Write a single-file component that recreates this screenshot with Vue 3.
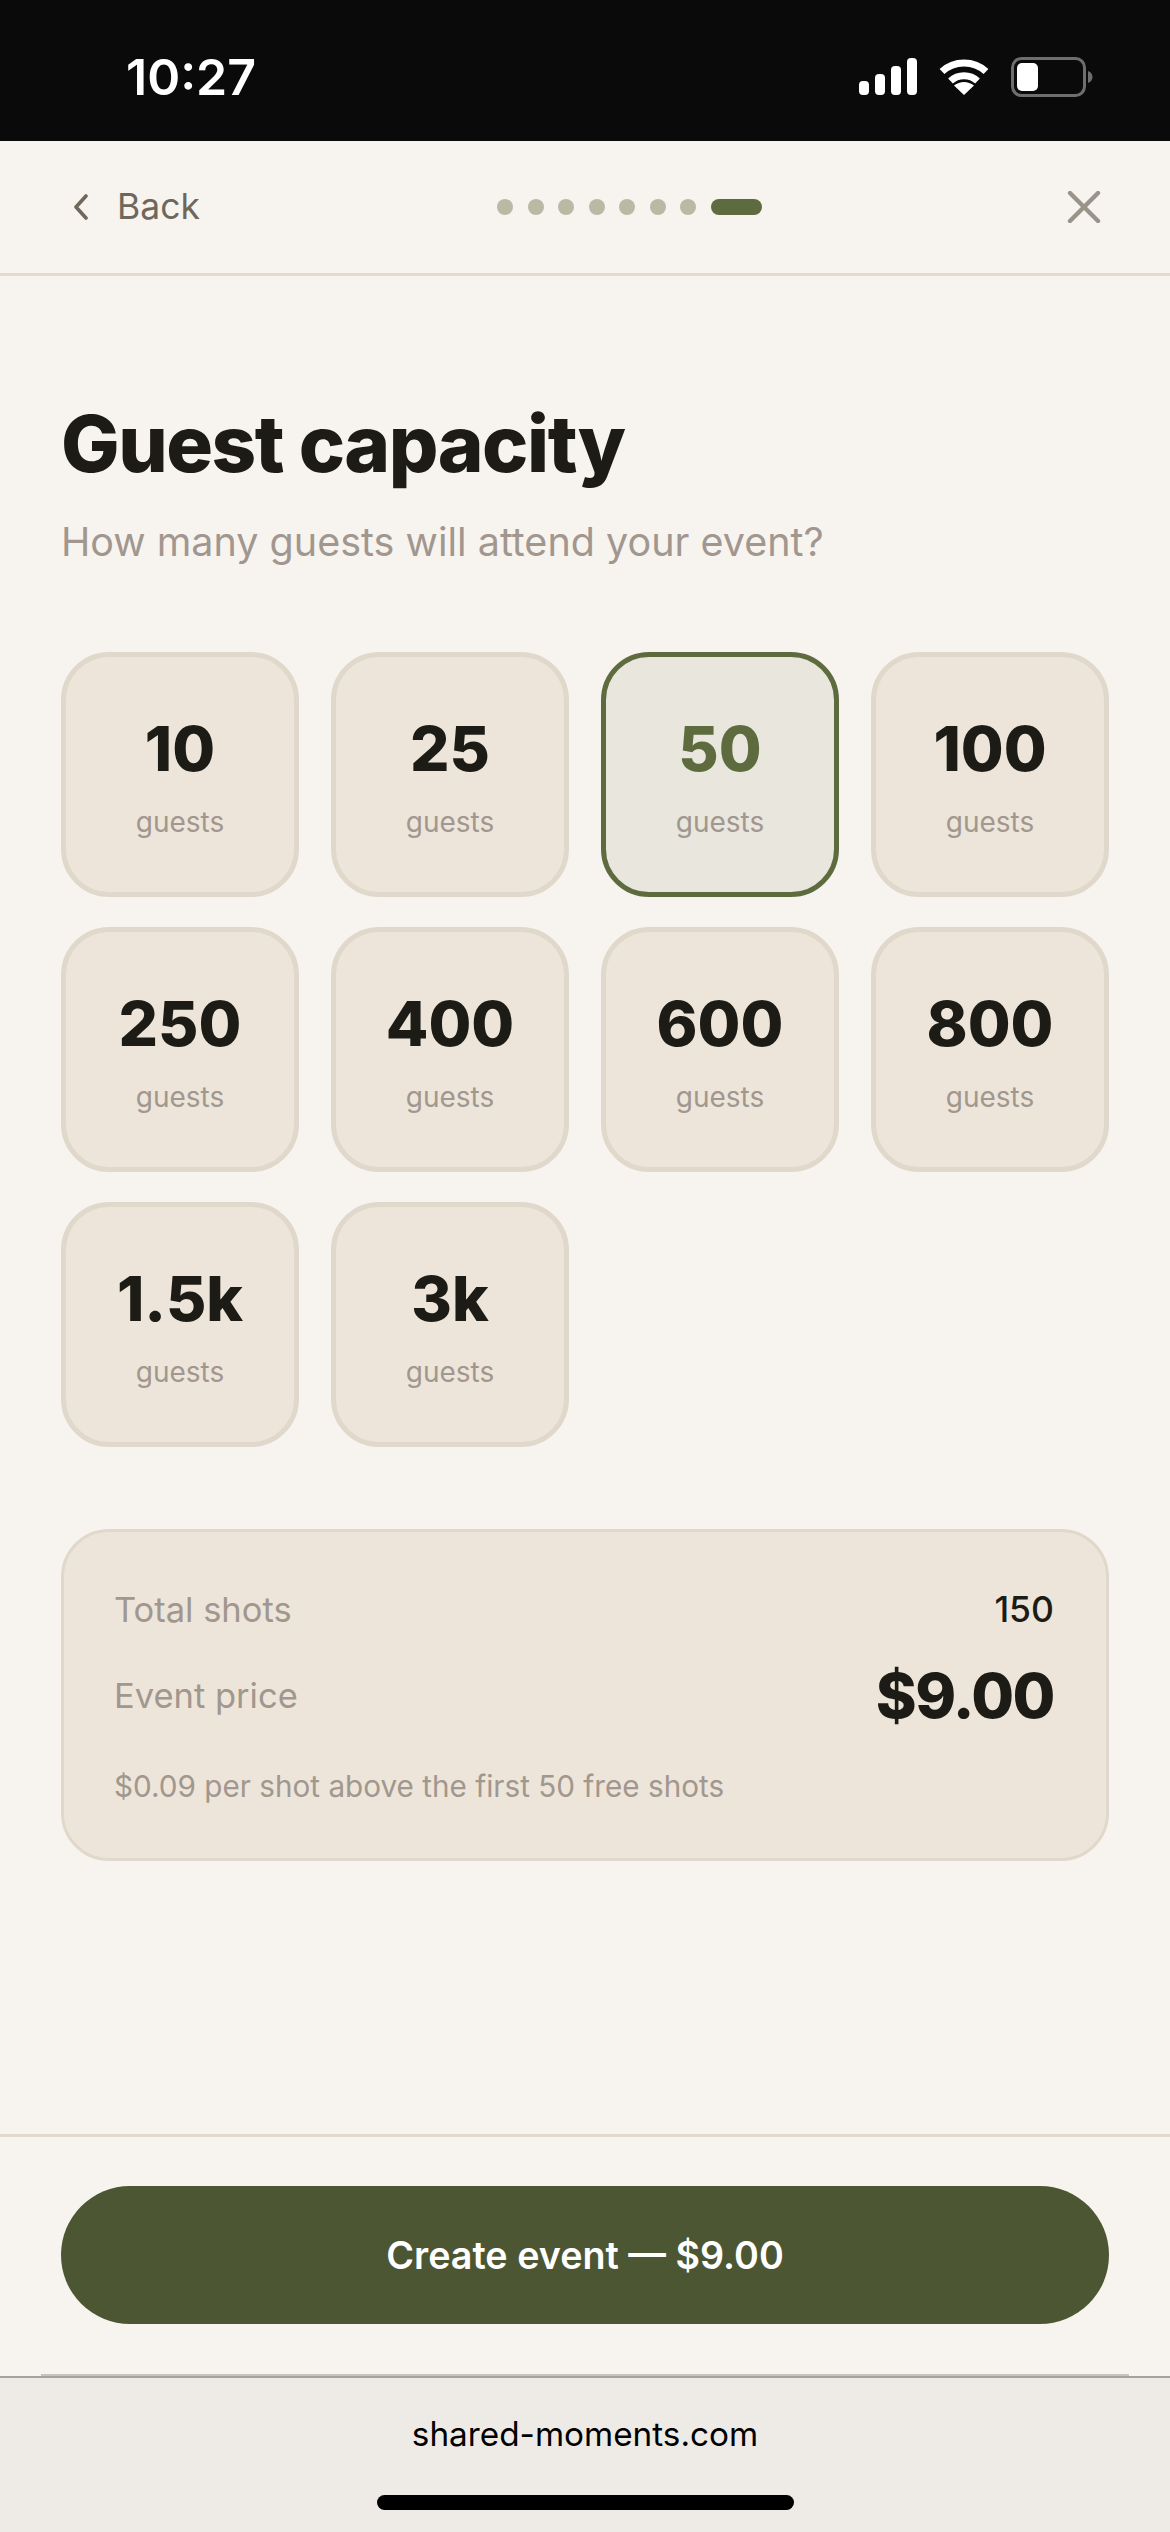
<template>
    <div class="screen">
        <div class="status-bar">
            <span class="time">10:27</span>
            <div class="status-icons">
                <svg width="58" height="38" viewBox="0 0 58 38" fill="#fff">
                    <rect x="0" y="23" width="10" height="14" rx="4" />
                    <rect x="16" y="16" width="10" height="21" rx="4" />
                    <rect x="32" y="8" width="10" height="29" rx="4" />
                    <rect x="48" y="0" width="10" height="37" rx="4" />
                </svg>
                <svg width="50" height="38" viewBox="0 0 50 38" fill="none" stroke="#fff" stroke-width="7">
                    <path d="M3 13.500C15 2 35 2 47 13.500" />
                    <path d="M11.500 23C19 16 31 16 38.500 23" />
                    <path d="M15 27.500L25 37L35 27.500C29 22.800 21 22.800 15 27.500Z" fill="#fff" stroke="none" />
                </svg>
                <svg width="82" height="40" viewBox="0 0 82 40" fill="none">
                    <rect x="1.500" y="1.500" width="72" height="37" rx="9" stroke="#6e6e6e" stroke-width="3" />
                    <rect x="6" y="6" width="21" height="28" rx="5" fill="#fff" />
                    <path d="M77 14C80 15 81.500 17.500 81.500 20C81.500 22.500 80 25 77 26Z" fill="#6e6e6e" />
                </svg>
            </div>
        </div>

        <div class="nav">
            <div class="back">
                <svg width="16" height="26" viewBox="0 0 16 26" fill="none" stroke="#6f675b" stroke-width="3.600" stroke-linecap="round" stroke-linejoin="round">
                    <path d="M13 2L3 13L13 24" />
                </svg>
                <span>Back</span>
            </div>
            <div class="steps">
                <span v-for="n in 7" :key="n" class="step"></span>
                <span class="step current"></span>
            </div>
            <svg class="close" width="34" height="32" viewBox="0 0 34 32" fill="none" stroke="#9a9389" stroke-width="4.400" stroke-linecap="round">
                <path d="M3 2L31 30M31 2L3 30" />
            </svg>
        </div>

        <div class="content">
            <h1 class="title">Guest capacity</h1>
            <p class="subtitle">How many guests will attend your event?</p>

            <div class="options">
                <div
                    v-for="opt in options"
                    :key="opt"
                    class="option"
                    :class="{ selected: opt === selected }"
                >
                    <span class="option-value">{{ opt }}</span>
                    <span class="option-label">guests</span>
                </div>
            </div>

            <div class="summary">
                <div class="summary-row first">
                    <span class="summary-label">Total shots</span>
                    <span class="summary-shots">150</span>
                </div>
                <div class="summary-row">
                    <span class="summary-label">Event price</span>
                    <span class="summary-price">$9.00</span>
                </div>
                <p class="summary-note">$0.09 per shot above the first 50 free shots</p>
            </div>
        </div>

        <div class="footer">
            <button class="create-btn">Create event — $9.00</button>
        </div>

        <div class="browser-bar">
            <span class="url">shared-moments.com</span>
            <div class="home-indicator"></div>
        </div>
    </div>
</template>

<script setup>
import { ref } from 'vue';

const options = ['10', '25', '50', '100', '250', '400', '600', '800', '1.5k', '3k'];
const selected = ref('50');
</script>

<style>
html, body {
    margin: 0;
    background: #f7f4ef;
}
</style>

<style scoped>
.screen {
    width: 1170px;
    height: 2532px;
    display: flex;
    flex-direction: column;
    background: #f7f4ef;
    font-family: Inter, "Liberation Sans", sans-serif;
    overflow: hidden;
}

.status-bar {
    height: 141px;
    flex: none;
    box-sizing: border-box;
    background: #0a0a0a;
    display: flex;
    align-items: center;
    justify-content: space-between;
    padding: 26px 77px 14px 126px;
}

.time {
    color: #fff;
    font-size: 50px;
    font-weight: 600;
    line-height: 1;
}

.status-icons {
    display: flex;
    align-items: center;
    gap: 22px;
}

.nav {
    height: 135px;
    flex: none;
    box-sizing: border-box;
    border-bottom: 3px solid #e3dacf;
    display: flex;
    align-items: center;
    justify-content: space-between;
    padding: 2px 69px 3px 73px;
    position: relative;
}

.back {
    display: flex;
    align-items: center;
    gap: 28px;
    color: #6f675b;
    font-size: 35.500px;
    line-height: 1;
}

.steps {
    position: absolute;
    left: 497px;
    top: 58px;
    display: flex;
    align-items: center;
    gap: 14.500px;
}

.step {
    width: 16px;
    height: 16px;
    border-radius: 50%;
    background: #b9b9a4;
}

.step.current {
    width: 51px;
    height: 16px;
    border-radius: 8px;
    background: #5e6b3f;
}

.content {
    flex: 1;
    padding: 0 61px;
}

.title {
    margin: 123px 0 0;
    font-size: 78px;
    line-height: 90px;
    font-weight: 800;
    letter-spacing: -1.500px;
    color: #1c1b15;
}

.subtitle {
    margin: 28px 0 0;
    font-size: 39.500px;
    line-height: 50px;
    color: #a1978f;
}

.options {
    margin-top: 85px;
    display: grid;
    grid-template-columns: repeat(4, 238px);
    grid-auto-rows: 245px;
    column-gap: 32px;
    row-gap: 30px;
}

.option {
    box-sizing: border-box;
    border: 5px solid #e0d8cb;
    border-radius: 48px;
    background: #ede5d9;
    display: flex;
    flex-direction: column;
    align-items: center;
    padding-top: 54px;
}

.option.selected {
    border-color: #5e6b3f;
    background: #e8e6dd;
}

.option-value {
    font-size: 62px;
    line-height: 76px;
    font-weight: 800;
    color: #1c1b15;
}

.option.selected .option-value {
    color: #5e6b3f;
}

.option-label {
    margin-top: 17px;
    font-size: 28px;
    line-height: 36px;
    color: #a1978f;
}

.summary {
    margin-top: 82px;
    box-sizing: border-box;
    height: 332px;
    border: 3px solid #e0d8cb;
    border-radius: 48px;
    background: #ede5d9;
    padding: 0 52px 0 50px;
}

.summary-row {
    display: flex;
    align-items: center;
    justify-content: space-between;
    height: 86px;
}

.summary-row.first {
    margin-top: 34px;
}

.summary-label {
    font-size: 34.500px;
    color: #a1978f;
}

.summary-shots {
    font-size: 35.500px;
    font-weight: 500;
    color: #1c1b15;
}

.summary-price {
    font-size: 62px;
    font-weight: 800;
    letter-spacing: -1.500px;
    color: #1c1b15;
}

.summary-note {
    margin: 28px 0 0;
    font-size: 29.700px;
    line-height: 40px;
    color: #a1978f;
}

.footer {
    height: 242px;
    flex: none;
    box-sizing: border-box;
    border-top: 3px solid #e3dacf;
    padding: 49px 61px 0;
}

.create-btn {
    display: block;
    width: 100%;
    height: 138px;
    border: none;
    border-radius: 69px;
    background: #4c5632;
    color: #fff;
    font-family: inherit;
    font-size: 37.700px;
    font-weight: 600;
}

.browser-bar {
    height: 156px;
    flex: none;
    box-sizing: border-box;
    border-top: 2px solid #a3a2a1;
    background: #eeebe7;
    display: flex;
    flex-direction: column;
    align-items: center;
    position: relative;
}

/* lighter inset edge sitting on top of the bar's hairline */
.browser-bar::before {
    content: "";
    position: absolute;
    top: -4px;
    left: 41px;
    right: 41px;
    height: 2px;
    background: #c6c4c0;
}

.url {
    margin-top: 35px;
    font-size: 33.300px;
    line-height: 42px;
    color: #000;
}

.home-indicator {
    margin-top: 40px;
    width: 417px;
    height: 15px;
    border-radius: 8px;
    background: #000;
}
</style>
